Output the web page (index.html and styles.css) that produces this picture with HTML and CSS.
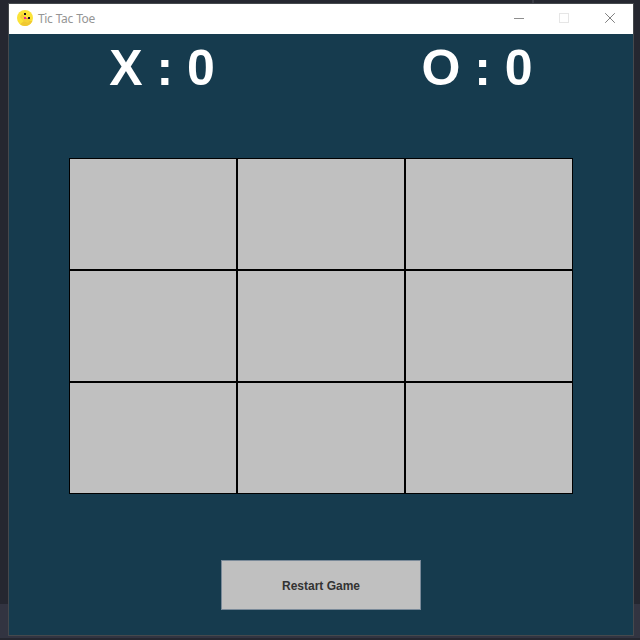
FILE: index.html
```
<!DOCTYPE html>
<html lang="en">
<head>
<meta charset="utf-8">
<title>Tic Tac Toe</title>
<link rel="stylesheet" href="styles.css">
</head>
<body>
<div class="backdrop-top"></div>
<div class="backdrop-bottom"></div>
<main class="window">
  <header class="titlebar">
    <svg class="logo" width="16" height="16" viewBox="0 0 16 16">
      <circle cx="8" cy="8" r="8" fill="#fbe338"/>
      <path d="M5 4 12 11H15.4A8 8 0 0 1 3 14.2L7 11 3 7Z" fill="#f0c832"/>
      <path d="M4 5 9 9H14L11 13 6 11Z" fill="#f5d336"/>
      <path d="M7 3h2v2H7zM11 7h2v2h-2z" fill="#17131c"/>
      <path d="M7 7h2v2H7z" fill="#f02891"/>
      <path d="M9 8h2v1H9z" fill="#e98a45"/>
    </svg>
    <span class="title">Tic Tac Toe</span>
    <div class="controls">
      <svg width="46" height="30" viewBox="0 0 46 30"><path d="M18 14.5h10" stroke="#8e8e8e" fill="none"/></svg>
      <svg width="46" height="30" viewBox="0 0 46 30"><rect x="17.5" y="9.5" width="9" height="9" stroke="#e6e6e6" fill="none"/></svg>
      <svg width="46" height="30" viewBox="0 0 46 30"><path d="M17.2 9.2l9.6 9.6M26.8 9.2l-9.6 9.6" stroke="#808080" fill="none"/></svg>
    </div>
  </header>
  <section class="scores">
    <div class="score">X : 0</div>
    <div class="score">O : 0</div>
  </section>
  <section class="board">
    <div class="cell"></div><div class="cell"></div><div class="cell"></div>
    <div class="cell"></div><div class="cell"></div><div class="cell"></div>
    <div class="cell"></div><div class="cell"></div><div class="cell"></div>
  </section>
  <button class="restart">Restart Game</button>
</main>
</body>
</html>
```
FILE: styles.css
```
* { box-sizing: border-box; }
body {
  margin: 0;
  width: 640px;
  height: 640px;
  padding: 3px 0 0 8px;
  overflow: hidden;
  background: #252730;
  font-family: "Liberation Sans", Arial, sans-serif;
}
.backdrop-top {
  position: absolute;
  z-index: -1;
  left: 532px;
  top: 0;
  width: 2px;
  height: 4px;
  background: #383a43;
}
.backdrop-bottom {
  position: absolute;
  z-index: -1;
  left: 0;
  top: 604px;
  width: 640px;
  height: 34px;
  background: #323441;
}
.window {
  width: 626px;
  height: 633px;
  border: 1px solid #45494d;
  background: #163b4e;
  display: flex;
  flex-direction: column;
  align-items: center;
}
.titlebar {
  width: 100%;
  height: 30px;
  display: flex;
  align-items: center;
  padding-left: 8px;
  background: #fff;
}
.logo {
  display: block;
  margin-top: -2px;
}
.title {
  margin: -1px 0 0 5px;
  font: 12px/16px "Noto Sans", sans-serif;
  letter-spacing: -0.4px;
  word-spacing: 0.7px;
  color: #959595;
}
.controls {
  display: flex;
  margin-left: auto;
  margin-right: -1px;
}
.scores {
  width: 100%;
  height: 124px;
  display: flex;
  padding-top: 4px;
}
.score {
  width: 312px;
  padding-right: 6px;
  text-align: center;
  font-size: 50px;
  line-height: 60px;
  font-weight: bold;
  color: #fff;
}
.score + .score {
  padding-right: 0;
}
.board {
  display: grid;
  grid-template-columns: repeat(3, 168px);
  grid-template-rows: repeat(3, 112px);
}
.cell {
  border: 1px solid #000;
  background: #c0c0c0;
}
.restart {
  width: 200px;
  height: 50px;
  margin-top: 66px;
  padding: 2px 0 0;
  border: 1px solid #7a8a99;
  border-radius: 0;
  background: #c0c0c0;
  color: #333;
  font: bold 12px "Liberation Sans", Arial, sans-serif;
}
```
